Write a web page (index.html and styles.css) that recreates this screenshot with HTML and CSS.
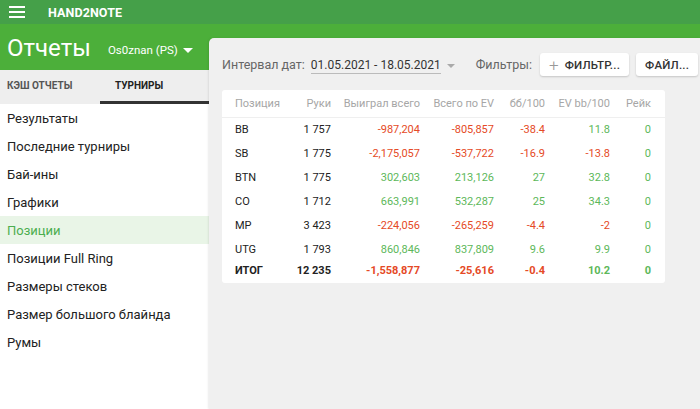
FILE: index.html
```html
<!DOCTYPE html>
<html lang="ru">

<head>
    <meta charset="UTF-8">
    <meta name="viewport" content="width=device-width, initial-scale=1.0">
    <title>Hand2Note - Отчеты</title>
    <link rel="stylesheet" href="styles.css">
</head>

<body>
    <div class="topbar">
        <svg class="burger" width="16" height="12" viewBox="0 0 16 12">
            <rect x="0" y="0" width="16" height="2" fill="#fff"></rect>
            <rect x="0" y="5" width="16" height="2" fill="#fff"></rect>
            <rect x="0" y="10" width="16" height="2" fill="#fff"></rect>
        </svg>
        <span class="brand">HAND2NOTE</span>
    </div>
    <div class="page">
        <aside class="side">
            <div class="head">
                <h1 class="title">Отчеты</h1>
                <span class="player">Os0znan (PS)</span>
                <span class="caret"></span>
            </div>
            <div class="tabs">
                <div class="tab">КЭШ ОТЧЕТЫ</div>
                <div class="tab active">ТУРНИРЫ</div>
            </div>
            <ul class="menu">
                <li>Результаты</li>
                <li>Последние турниры</li>
                <li>Бай-ины</li>
                <li>Графики</li>
                <li class="selected">Позиции</li>
                <li>Позиции Full Ring</li>
                <li>Размеры стеков</li>
                <li>Размер большого блайнда</li>
                <li>Румы</li>
            </ul>
        </aside>
        <main class="main">
            <div class="panel">
                <div class="filters">
                    <span class="lbl">Интервал дат:</span>
                    <span class="dates">01.05.2021 - 18.05.2021</span>
                    <span class="arrow"></span>
                    <span class="lbl f-lbl">Фильтры:</span>
                    <button class="btn"><span class="plus">+</span>ФИЛЬТР...</button>
                    <button class="btn">ФАЙЛ...</button>
                </div>
                <div class="card">
                    <table class="stats">
                        <colgroup>
                            <col class="c1"><col class="c2"><col class="c3"><col class="c4"><col class="c5"><col class="c6"><col class="c7">
                        </colgroup>
                        <thead>
                            <tr>
                                <th class="left">Позиция</th>
                                <th>Руки</th>
                                <th>Выиграл всего</th>
                                <th>Всего по EV</th>
                                <th>бб/100</th>
                                <th>EV bb/100</th>
                                <th>Рейк</th>
                            </tr>
                        </thead>
                        <tbody>
                            <tr>
                                <td class="left">BB</td><td>1 757</td>
                                <td class="neg">-987,204</td><td class="neg">-805,857</td>
                                <td class="neg">-38.4</td><td class="pos">11.8</td><td class="pos">0</td>
                            </tr>
                            <tr>
                                <td class="left">SB</td><td>1 775</td>
                                <td class="neg">-2,175,057</td><td class="neg">-537,722</td>
                                <td class="neg">-16.9</td><td class="neg">-13.8</td><td class="pos">0</td>
                            </tr>
                            <tr>
                                <td class="left">BTN</td><td>1 775</td>
                                <td class="pos">302,603</td><td class="pos">213,126</td>
                                <td class="pos">27</td><td class="pos">32.8</td><td class="pos">0</td>
                            </tr>
                            <tr>
                                <td class="left">CO</td><td>1 712</td>
                                <td class="pos">663,991</td><td class="pos">532,287</td>
                                <td class="pos">25</td><td class="pos">34.3</td><td class="pos">0</td>
                            </tr>
                            <tr>
                                <td class="left">MP</td><td>3 423</td>
                                <td class="neg">-224,056</td><td class="neg">-265,259</td>
                                <td class="neg">-4.4</td><td class="neg">-2</td><td class="pos">0</td>
                            </tr>
                            <tr>
                                <td class="left">UTG</td><td>1 793</td>
                                <td class="pos">860,846</td><td class="pos">837,809</td>
                                <td class="pos">9.6</td><td class="pos">9.9</td><td class="pos">0</td>
                            </tr>
                            <tr class="total">
                                <td class="left">ИТОГ</td><td>12 235</td>
                                <td class="neg">-1,558,877</td><td class="neg">-25,616</td>
                                <td class="neg">-0.4</td><td class="pos">10.2</td><td class="pos">0</td>
                            </tr>
                        </tbody>
                    </table>
                </div>
            </div>
        </main>
    </div>
</body>

</html>
```

FILE: styles.css
```css
* {
    box-sizing: border-box;
}

body {
    margin: 0px;
    padding: 0px;
    height: 409px;
    overflow: hidden;
    font-family: Roboto, "Liberation Sans", sans-serif;
    color: #222;
    background: #f0f0f0;
}

.topbar {
    height: 24px;
    background-color: #45a049;
    display: flex;
    align-items: center;
    padding-left: 9px;
}

.burger {
    display: block;
}

.brand {
    margin-left: 23px;
    color: #fff;
    font-size: 12.5px;
    font-weight: 700;
    letter-spacing: 0.1px;
}

.page {
    display: flex;
    height: 385px;
}

/* left column */
.side {
    width: 209px;
    background: #fff;
    flex-shrink: 0;
}

.head {
    height: 46px;
    background-color: #4caf3a;
    display: flex;
    align-items: center;
    padding-left: 7px;
    padding-top: 2px;
    white-space: nowrap;
}

.title {
    margin: 0px;
    font-size: 24px;
    font-weight: 400;
    color: #fff;
}

.player {
    margin-left: 17px;
    margin-top: 4px;
    font-size: 11.5px;
    color: #fff;
}

.caret {
    margin-left: 5px;
    margin-top: 4px;
    border-left: 5px solid transparent;
    border-right: 5px solid transparent;
    border-top: 5px solid #fff;
}

.tabs {
    display: flex;
    height: 34px;
    background: #eeeeee;
}

.tab {
    width: 100px;
    padding-left: 7px;
    padding-top: 10px;
    font-size: 10px;
    font-weight: 700;
    color: #555;
}

.tab.active {
    width: 109px;
    padding-left: 15px;
    color: #222;
    border-bottom: 3px solid #333;
}

.menu {
    list-style: none;
    margin: 0px;
    padding: 0px;
}

.menu li {
    height: 28px;
    line-height: 29px;
    padding-left: 7px;
    font-size: 13px;
    color: #222;
}

.menu li.selected {
    background: #e9f5e7;
    color: #4cae4f;
}

/* right side */
.main {
    flex: 1;
    min-width: 0;
    background-color: #4caf3a;
}

.panel {
    margin-top: 14px;
    height: 371px;
    background: #f0f0f0;
    border-top-left-radius: 5px;
    padding: 15px 0px 0px 13px;
    box-shadow: -1px 0px 2px rgba(0, 0, 0, 0.08);
}

.filters {
    display: flex;
    align-items: center;
    height: 23px;
    font-size: 12.5px;
    white-space: nowrap;
}

.filters > * {
    flex-shrink: 0;
}

.lbl {
    color: #666;
}

.dates {
    margin-left: 6px;
    font-size: 12px;
    color: #333;
    border-bottom: 1px solid #bbb;
    line-height: 15px;
    margin-top: 2px;
}

.arrow {
    margin-left: 6px;
    margin-top: 2px;
    border-left: 4px solid transparent;
    border-right: 4px solid transparent;
    border-top: 4px solid #aaa;
}

.f-lbl {
    margin-left: 21px;
}

.btn {
    height: 23px;
    margin-left: 8px;
    padding: 0px 9px;
    border: none;
    border-radius: 3px;
    background: #fff;
    box-shadow: 0px 1px 2px rgba(0, 0, 0, 0.18);
    font-family: Roboto, "Liberation Sans", sans-serif;
    font-size: 11.5px;
    font-weight: 500;
    color: #333;
    letter-spacing: 0.2px;
}

.btn + .btn {
    margin-left: 7px;
    padding: 0px 9px;
}

.plus {
    color: #999;
    font-size: 17px;
    font-weight: 300;
    margin-right: 6px;
    vertical-align: -2px;
}

.card {
    margin-top: 14px;
    width: 443px;
    background: #fff;
    border-radius: 3px;
    padding-bottom: 4px;
}

.stats {
    width: 443px;
    border-collapse: collapse;
    table-layout: fixed;
    font-size: 11px;
}

.c1 { width: 67px; }
.c2 { width: 42px; }
.c3 { width: 89px; }
.c4 { width: 74px; }
.c5 { width: 51px; }
.c6 { width: 65px; }
.c7 { width: 55px; }

.stats th {
    height: 27px;
    font-weight: 400;
    color: #a6a6a6;
    text-align: right;
    padding: 0px;
    border-bottom: 1px solid #efefef;
}

.stats td {
    height: 24px;
    text-align: right;
    padding: 0px;
    color: #222;
}

.stats th:last-child,
.stats td:last-child {
    padding-right: 14px;
}

.stats .left {
    text-align: left;
    padding-left: 13px;
}

.stats .neg {
    color: #e54a26;
}

.stats .pos {
    color: #5db85a;
}

.stats .total td {
    height: 18px;
    font-weight: 700;
}
```
